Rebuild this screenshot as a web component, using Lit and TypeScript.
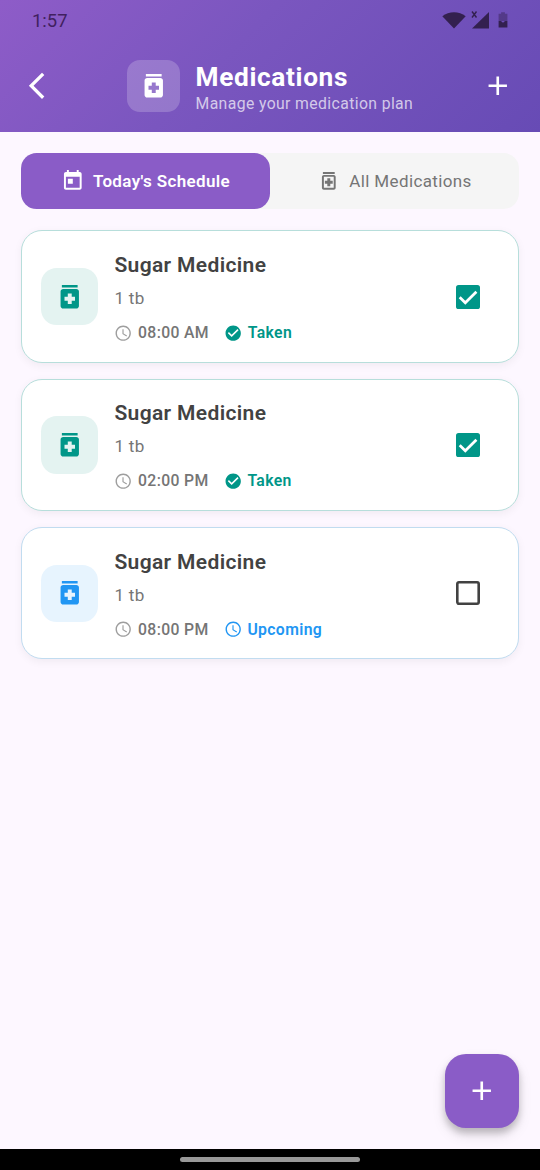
import { LitElement, html, css, svg } from "lit";
import { customElement, property } from "lit/decorators.js";

const paths = {
  back: "M17.77 3.77L16 2 6 12l10 10 1.77-1.77L9.54 12z",
  add: "M19 13h-6v6h-2v-6H5v-2h6V5h2v6h6v2z",
  medication:
    "M6 3h12v2H6zM17 6H7c-1.1 0-2 .9-2 2v11c0 1.1.9 2 2 2h10c1.1 0 2-.9 2-2V8c0-1.1-.9-2-2-2zm-1 9h-2.5v2.5h-3V15H8v-3h2.5V9.5h3V12H16v3z",
  medicationOutlined:
    "M10.5 17.5V15H8v-3h2.5V9.5h3V12H16v3h-2.5v2.5zM19 8v11c0 1.1-.9 2-2 2H7c-1.1 0-2-.9-2-2V8c0-1.1.9-2 2-2h10c1.1 0 2 .9 2 2zm-2 0H7v11h10V8zm1-5H6v2h12V3z",
  today:
    "M19 3h-1V1h-2v2H8V1H6v2H5c-1.11 0-1.99.9-1.99 2L3 19c0 1.1.89 2 2 2h14c1.1 0 2-.9 2-2V5c0-1.1-.9-2-2-2zm0 16H5V8h14v11zM7 10h5v5H7z",
  clock:
    "M11.99 2C6.47 2 2 6.48 2 12s4.47 10 9.99 10C17.52 22 22 17.52 22 12S17.52 2 11.99 2zM12 20.2a8.2 8.2 0 1 1 0-16.4 8.2 8.2 0 0 1 0 16.4zM12.5 7H11v6l5.25 3.15.75-1.23-4.5-2.67z",
  checkCircle:
    "M12 2C6.48 2 2 6.48 2 12s4.48 10 10 10 10-4.48 10-10S17.52 2 12 2zm-2 15l-5-5 1.41-1.41L10 14.17l7.59-7.59L19 8l-9 9z",
};
type IconName = keyof typeof paths;

@customElement("md-icon")
class MdIcon extends LitElement {
  static styles = css`
    :host { display: block; flex: none; width: 31.5px; height: 31.5px; }
    svg { display: block; width: 100%; height: 100%; fill: currentColor; }
  `;
  @property() name: IconName = "add";
  render() {
    return html`<svg viewBox="0 0 24 24">${svg`<path fill-rule="evenodd" d=${paths[this.name]}></path>`}</svg>`;
  }
}

@customElement("medication-card")
class MedicationCard extends LitElement {
  static styles = css`
    :host { display: block; }
    .card {
      box-sizing: border-box; height: 132.4px; display: flex; align-items: center;
      padding: 0 38px 0 19px; border: 1.3px solid #b7dedb; border-radius: 21px;
      background: #fff; box-shadow: 0 2.6px 8px rgba(0, 0, 0, 0.05);
    }
    .card.upcoming { border-color: #c1dcf0; }
    .badge {
      width: 57.4px; height: 57.4px; border-radius: 15.75px; flex: none;
      display: flex; align-items: center; justify-content: center;
      background: #e4f3f1; color: #009688; margin-right: 16px;
    }
    .upcoming .badge { background: #e7f4fe; color: #2196f3; }
    .info { flex: 1; padding-top: 1.6px; }
    .name { font-size: 21px; line-height: 28px; font-weight: 600; color: #424242; letter-spacing: 0.36px; }
    .dose { margin-top: 6px; font-size: 17px; line-height: 26px; color: #757575; letter-spacing: 0.33px; }
    .meta { margin-top: 11px; display: flex; align-items: center; font-size: 15.75px; line-height: 22px; color: #757575; }
    .meta md-icon { width: 18.4px; height: 18.4px; margin-right: 5.3px; }
    .meta .clock { color: #9e9e9e; }
    .time { font-weight: 500; letter-spacing: 0.34px; margin-right: 15.2px; }
    .status { display: flex; align-items: center; font-weight: 600; letter-spacing: 0.36px; color: #009688; }
    .upcoming .status { color: #2196f3; }
    .check { display: block; flex: none; width: 24px; height: 24px; fill: none; }
    .box { stroke: #424242; stroke-width: 2.6; }
    .fill { fill: #009688; }
    .tick { stroke: #fff; stroke-width: 2.7; }
  `;
  @property() time = "";
  @property({ type: Boolean }) taken = false;
  render() {
    return html`<div class="card ${this.taken ? "" : "upcoming"}">
      <div class="badge"><md-icon name="medication"></md-icon></div>
      <div class="info">
        <div class="name">Sugar Medicine</div>
        <div class="dose">1 tb</div>
        <div class="meta">
          <md-icon class="clock" name="clock"></md-icon><span class="time">${this.time}</span>
          <span class="status"><md-icon name=${this.taken ? "checkCircle" : "clock"}></md-icon>${this.taken ? "Taken" : "Upcoming"}</span>
        </div>
      </div>
      ${this.taken
        ? html`<svg class="check" viewBox="0 0 24 24"><rect class="fill" width="24" height="24" rx="2.6"></rect><path class="tick" d="M3.7 12.2l5.6 5.6L20.4 6.7"></path></svg>`
        : html`<svg class="check" viewBox="0 0 24 24"><rect class="box" x="1.3" y="1.3" width="21.4" height="21.4" rx="1.6"></rect></svg>`}
    </div>`;
  }
}

@customElement("app-root")
class AppRoot extends LitElement {
  static styles = css`
    :host {
      display: flex; flex-direction: column; position: relative; width: 540px; height: 1170px;
      overflow: hidden; background: #fdf7ff; font-family: Roboto, sans-serif;
    }
    .header { height: 132px; flex: none; background: linear-gradient(135deg, #8e5cc8, #7a56bf 42%, #674bb5); color: #fff; }
    .statusbar { height: 40px; box-sizing: border-box; padding: 0 30px 0 32px; display: flex; align-items: center; justify-content: space-between; color: #33204f; }
    .clock { font-size: 18.4px; line-height: 40px; padding-top: 1px; color: #41215f; }
    .system { display: block; width: 68px; height: 20px; fill: currentColor; }
    .toolbar { height: 92px; box-sizing: border-box; padding: 0 26.6px 0 21px; display: flex; align-items: center; }
    .logo {
      width: 52.5px; height: 52.5px; margin: 0 16px 0 74.5px; border-radius: 13px; flex: none;
      background: rgba(255, 255, 255, 0.2); display: flex; align-items: center; justify-content: center;
    }
    .titles { flex: 1; padding-top: 4px; }
    .title { font-size: 26.25px; line-height: 30px; font-weight: 700; letter-spacing: 0.65px; }
    .subtitle { font-size: 15.75px; line-height: 22px; padding-top: 1px; margin-bottom: -1px; letter-spacing: 0.39px; color: rgba(255, 255, 255, 0.7); }
    .tabs { margin: 21px 21px 0; height: 56.4px; flex: none; display: flex; background: #f5f5f5; border-radius: 15.75px; }
    .tab { flex: 1; display: flex; align-items: center; justify-content: center; gap: 8.4px; font-size: 17px; letter-spacing: 0.36px; color: #757575; border-radius: 15.75px; }
    .tab md-icon { width: 23.6px; height: 23.6px; }
    .tab.active { background: #8a5cc7; color: #fff; font-weight: 600; }
    .list { flex: 1; padding: 21.1px 21px 0; display: flex; flex-direction: column; gap: 15.9px; }
    .fab {
      position: absolute; right: 21.3px; bottom: 42.2px; width: 73.5px; height: 73.5px; border-radius: 21px;
      background: #8a5cc7; color: #fff; display: flex; align-items: center; justify-content: center;
      box-shadow: 0 5px 7px rgba(0, 0, 0, 0.2), 0 7px 14px rgba(0, 0, 0, 0.1);
    }
    .navbar { position: relative; height: 21px; flex: none; background: #000; display: flex; align-items: center; justify-content: center; }
    .pill { width: 180px; height: 5px; border-radius: 3px; background: #999; }
  `;
  render() {
    return html`
      <div class="header">
        <div class="statusbar">
          <div class="clock">1:57</div>
          <svg class="system" viewBox="0 0 68 20">
            <path d="M.3 6.2C6.8.8 17.2.8 23.7 6.2L12 18.6z"></path>
            <path d="M47 2v16.6H30z"></path>
            <path d="M30 1.5l4.5 6M34.5 1.5l-4.5 6" stroke="currentColor" stroke-width="1.4"></path>
            <path opacity=".45" d="M56.6 3.8h2.5V2.3h3.8v1.5h2.5V11h-8.8z"></path>
            <path d="M56.6 11h2.4l2 1.8 2-1.8h2.4v6.5h-8.8z"></path>
          </svg>
        </div>
        <div class="toolbar">
          <md-icon name="back"></md-icon>
          <div class="logo"><md-icon name="medication"></md-icon></div>
          <div class="titles">
            <div class="title">Medications</div>
            <div class="subtitle">Manage your medication plan</div>
          </div>
          <md-icon name="add"></md-icon>
        </div>
      </div>
      <div class="tabs">
        <div class="tab active"><md-icon name="today"></md-icon>Today's Schedule</div>
        <div class="tab"><md-icon name="medicationOutlined"></md-icon>All Medications</div>
      </div>
      <div class="list">
        <medication-card time="08:00 AM" taken></medication-card>
        <medication-card time="02:00 PM" taken></medication-card>
        <medication-card time="08:00 PM"></medication-card>
      </div>
      <div class="fab"><md-icon name="add"></md-icon></div>
      <div class="navbar"><div class="pill"></div></div>
    `;
  }
}
